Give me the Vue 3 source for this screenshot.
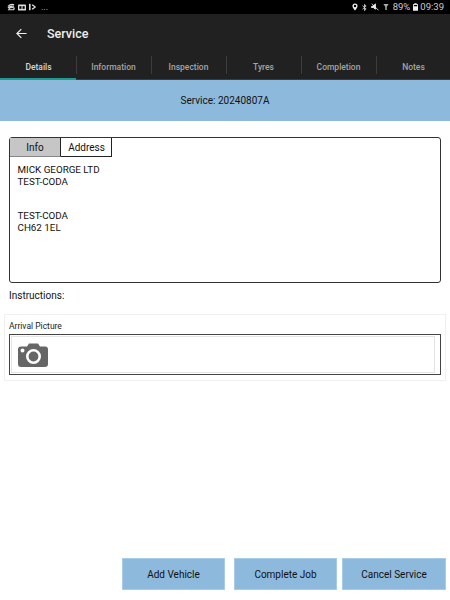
<script setup>
const tabs = ['Details', 'Information', 'Inspection', 'Tyres', 'Completion', 'Notes']
const actions = ['Add Vehicle', 'Complete Job', 'Cancel Service']
</script>

<template>
  <div class="screen">
    <div class="status">
      <div class="status-left">
        <svg width="8" height="8" viewBox="0 0 9 8"><path d="M1 3.2 Q4 .2 8 1.4 M1 5 Q4 2.4 8 3.2 M1 7 H7.5 Q8.6 5.6 7.6 4.8 Q4 4.2 2 6" fill="none" stroke="#ddd" stroke-width="1.2"/></svg>
        <svg width="8" height="7" viewBox="0 0 9 7"><rect width="9" height="7" rx="1" fill="#ddd"/><rect x="1.5" y="2" width="2.4" height="3" fill="#000"/><rect x="5.1" y="2" width="2.4" height="3" fill="#000"/></svg>
        <svg width="8" height="8" viewBox="0 0 10 8"><rect x="0" y="0" width="2" height="8" fill="#ddd"/><path d="M3.6 .8 H5 L9 4 L5 7.2 H3.6 V5.8 L6.6 4 L3.6 2.2Z" fill="#ddd"/></svg>
        <span class="dots">...</span>
      </div>
      <div class="status-right">
        <svg width="6" height="8" viewBox="0 0 7 9"><path d="M3.5 .3 A3 3 0 0 1 6.5 3.3 C6.5 5.2 4.4 7.4 3.5 8.7 C2.6 7.4 .5 5.2 .5 3.3 A3 3 0 0 1 3.5 .3Z M3.5 2 A1.4 1.4 0 1 0 3.5 4.8 A1.4 1.4 0 1 0 3.5 2Z" fill="#eee" fill-rule="evenodd"/></svg>
        <svg class="bt" width="5" height="9" viewBox="0 0 6 9"><path d="M.6 2.4 L5 6.3 L3 8.2 V.8 L5 2.7 L.6 6.6" fill="none" stroke="#ddd" stroke-width="1"/></svg>
        <svg class="mute" width="8" height="8" viewBox="0 0 9 9"><path d="M.5 4 L2.5 3.4 L5 1 V7 L2.5 5 H.5Z M1 .8 L8.4 8.2" fill="#eee" stroke="#eee" stroke-width="1"/></svg>
        <svg class="signal" width="6" height="8" viewBox="0 0 8 9"><path d="M.5 .5 H7.5 L5 4 V8.5 H3 V4Z" fill="#aaa"/></svg>
        <span class="pct">89%</span>
        <svg class="batt" width="5" height="8" viewBox="0 0 6 9"><rect x="1.6" y="0" width="2.8" height="1.2" fill="#eee"/><rect x="0" y="1" width="6" height="8" rx=".6" fill="#eee"/><rect x="1" y="2" width="4" height="1.6" fill="#000"/></svg>
        <span class="time">09:39</span>
      </div>
    </div>

    <header class="appbar">
      <svg class="back" width="11" height="11" viewBox="0 0 12 12"><path d="M11.5 6 H1.2 M5.8 1.2 L1 6 L5.8 10.8" fill="none" stroke="#eee" stroke-width="1.3"/></svg>
      <span class="title">Service</span>
    </header>

    <nav class="tabs">
      <div v-for="(tab, i) in tabs" :key="tab" class="tab" :class="{ active: i === 0 }">
        <span>{{ tab }}</span>
      </div>
    </nav>

    <div class="banner">Service: 20240807A</div>

    <main class="content">
      <section class="card">
        <div class="card-tabs">
          <div class="card-tab selected">Info</div>
          <div class="card-tab">Address</div>
        </div>
        <div class="address">
          <div>MICK GEORGE LTD</div>
          <div>TEST-CODA</div>
          <div class="gap"></div>
          <div>TEST-CODA</div>
          <div>CH62 1EL</div>
        </div>
      </section>

      <div class="instructions">Instructions:</div>

      <section class="picture">
        <div class="picture-label">Arrival Picture</div>
        <div class="picture-box">
          <div class="picture-inner">
            <svg width="30" height="24" viewBox="0 0 30 24">
              <path fill-rule="evenodd" fill="#666" d="M3 3.5 H9 L11 .5 H20 L22 3.5 H27 A3 3 0 0 1 30 6.5 V21 A3 3 0 0 1 27 24 H3 A3 3 0 0 1 0 21 V6.5 A3 3 0 0 1 3 3.5Z M15.5 6 A7.5 7.5 0 1 0 15.5 21 A7.5 7.5 0 1 0 15.5 6Z M15.5 8.6 A4.9 4.9 0 1 1 15.5 18.4 A4.9 4.9 0 1 1 15.5 8.6Z M4.5 5.5 A2 2 0 1 0 4.5 9.5 A2 2 0 1 0 4.5 5.5Z"/>
            </svg>
          </div>
        </div>
      </section>
    </main>

    <footer class="actions">
      <button v-for="a in actions" :key="a" class="action">{{ a }}</button>
    </footer>
  </div>
</template>

<style>
html, body { margin: 0; background: #fff; }
</style>

<style scoped>
.screen {
  width: 450px;
  height: 600px;
  display: flex;
  flex-direction: column;
  font-family: Roboto, "Liberation Sans", sans-serif;
  color: #111;
  background: #fff;
  overflow: hidden;
}
.status {
  height: 14px;
  background: #000;
  display: flex;
  justify-content: space-between;
  align-items: center;
  padding: 0 6px 0 7px;
  color: #ccc;
  flex: none;
}
.status-left, .status-right { display: flex; align-items: center; }
.status-left { gap: 3px; }
.status-right { gap: 4px; }
.dots { font-size: 9px; line-height: 9px; margin-top: 1px; margin-left: 1px; }
.pct, .time { font-size: 9.5px; line-height: 12px; }
.batt { margin-left: -1px; margin-right: -2px; }
.appbar {
  height: 38px;
  flex: none;
  background: #212121;
  display: flex;
  align-items: center;
  padding: 0 0 0 16px;
  box-sizing: border-box;
}
.back { margin-right: 20px; }
.title { color: #eee; font-size: 12.5px; font-weight: 500; }
.tabs {
  height: 28px;
  flex: none;
  background: #212121;
  display: grid;
  grid-template-columns: repeat(6, 75px);
  border-bottom: 1px solid #3a3a3a;
  box-sizing: border-box;
}
.tab {
  position: relative;
  display: flex;
  align-items: center;
  justify-content: center;
  color: #a4a4a4;
  font-size: 8.5px;
  font-weight: 500;
  padding: 2px 0 0 2px;
}
.tab + .tab::before {
  content: "";
  position: absolute;
  left: 1px;
  top: 4px;
  bottom: 5px;
  width: 1px;
  background: #3d3d3d;
}
.tab.active { color: #d8d8d8; }
.tab.active::after {
  content: "";
  position: absolute;
  left: 0;
  right: -1px;
  bottom: -1px;
  height: 2px;
  background: #1f9a8f;
}
.banner {
  height: 41px;
  flex: none;
  background: #8db9dc;
  display: flex;
  align-items: center;
  justify-content: center;
  font-size: 10px;
}
.content {
  flex: 1;
  padding: 16px 4px 0;
  display: flex;
  flex-direction: column;
}
.card {
  margin: 0 5px;
  height: 146px;
  box-sizing: border-box;
  border: 1px solid #333;
  border-radius: 3px;
  flex: none;
}
.card-tabs { display: flex; height: 19px; }
.card-tab {
  display: flex;
  align-items: center;
  justify-content: center;
  box-sizing: border-box;
  width: 51px;
  padding-left: 1px;
  font-size: 10px;
  border-right: 1px solid #222;
  border-bottom: 1px solid #222;
}
.card-tab.selected {
  background: #c6c6c6;
  border-bottom-color: #888;
  padding-left: 0;
}
.address {
  padding: 7px 7px 7px 7.5px;
  font-size: 9.8px;
  line-height: 12px;
}
.gap { height: 22px; }
.instructions {
  margin: 7px 5px 0;
  font-size: 10px;
  line-height: 12px;
}
.picture {
  margin-top: 12px;
  height: 67px;
  box-sizing: border-box;
  border: 1px solid #f0f0f0;
  padding: 6px 4px 4px;
  flex: none;
}
.picture-label {
  font-size: 8.5px;
  line-height: 10px;
  margin-bottom: 3px;
  color: #222;
}
.picture-box {
  height: 41px;
  box-sizing: border-box;
  border: 1px solid #444;
  padding: 1px 5px 1px 1px;
}
.picture-inner {
  height: 100%;
  box-sizing: border-box;
  border: 1px solid #e4e4e4;
  display: flex;
  align-items: center;
  padding-left: 6px;
}
.actions {
  flex: none;
  display: flex;
  justify-content: flex-end;
  padding: 0 4px 10px 0;
}
.action {
  width: 104px;
  height: 32px;
  box-sizing: border-box;
  background: #8db9dc;
  border: 1px solid #a9cce6;
  font: inherit;
  font-size: 10px;
  color: #111;
  padding: 0;
}
.action:first-child { width: 103px; margin-right: 1px; }
.action:nth-child(2) { width: 103px; margin-left: 8px; margin-right: 5px; }
</style>
